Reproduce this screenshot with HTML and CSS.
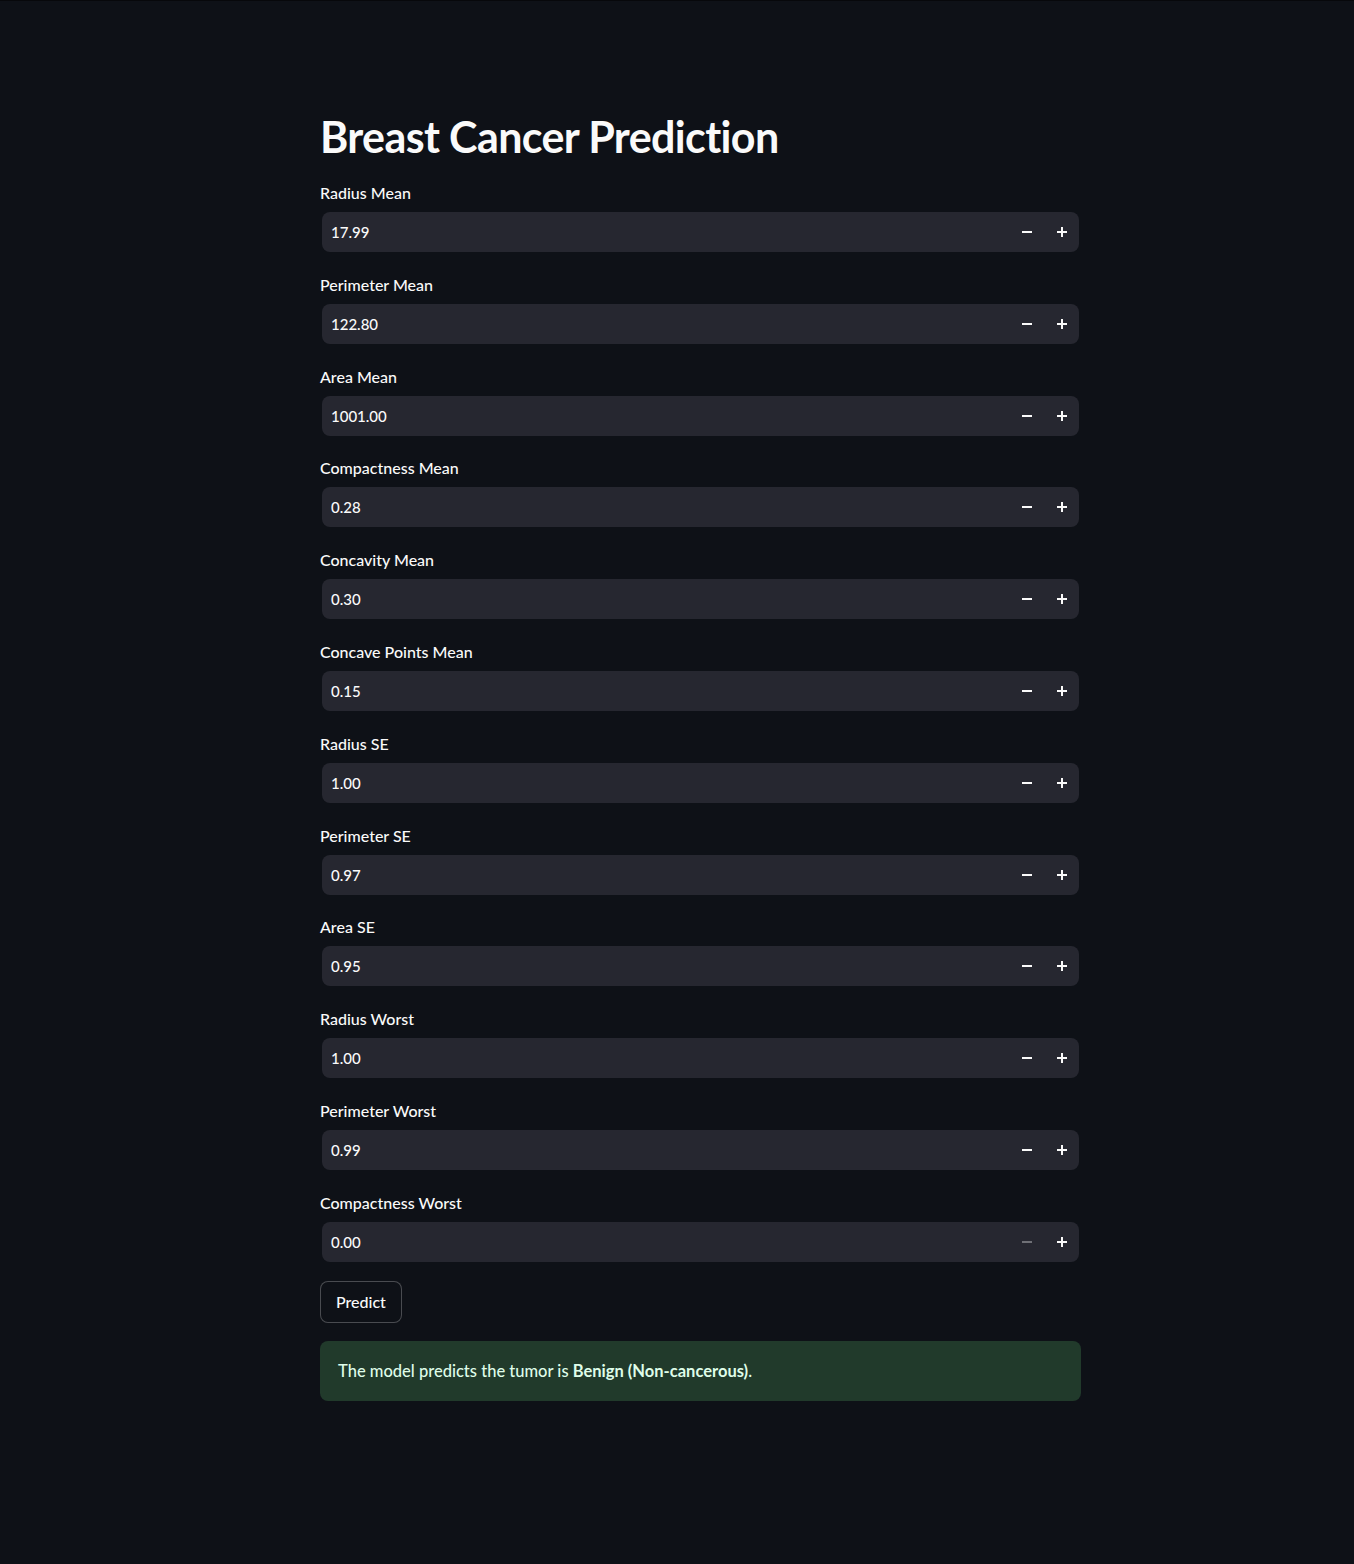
FILE: index.html
```html
<!DOCTYPE html>
<html lang="en">
<head>
<meta charset="utf-8">
<title>Breast Cancer Prediction</title>
<link rel="stylesheet" href="styles.css">
</head>
<body>
<main class="page">
  <h1 class="title">Breast Cancer Prediction</h1>
  <div class="form">
    <div class="field">
      <div class="label">Radius Mean</div>
      <div class="number"><span class="value">17.99</span><span class="step"><svg viewBox="0 0 10 10"><path d="M0 5H10"/></svg></span><span class="step"><svg viewBox="0 0 10 10"><path d="M0 5H10M5 0V10"/></svg></span></div>
    </div>
    <div class="field">
      <div class="label">Perimeter Mean</div>
      <div class="number"><span class="value">122.80</span><span class="step"><svg viewBox="0 0 10 10"><path d="M0 5H10"/></svg></span><span class="step"><svg viewBox="0 0 10 10"><path d="M0 5H10M5 0V10"/></svg></span></div>
    </div>
    <div class="field">
      <div class="label">Area Mean</div>
      <div class="number"><span class="value">1001.00</span><span class="step"><svg viewBox="0 0 10 10"><path d="M0 5H10"/></svg></span><span class="step"><svg viewBox="0 0 10 10"><path d="M0 5H10M5 0V10"/></svg></span></div>
    </div>
    <div class="field">
      <div class="label">Compactness Mean</div>
      <div class="number"><span class="value">0.28</span><span class="step"><svg viewBox="0 0 10 10"><path d="M0 5H10"/></svg></span><span class="step"><svg viewBox="0 0 10 10"><path d="M0 5H10M5 0V10"/></svg></span></div>
    </div>
    <div class="field">
      <div class="label">Concavity Mean</div>
      <div class="number"><span class="value">0.30</span><span class="step"><svg viewBox="0 0 10 10"><path d="M0 5H10"/></svg></span><span class="step"><svg viewBox="0 0 10 10"><path d="M0 5H10M5 0V10"/></svg></span></div>
    </div>
    <div class="field">
      <div class="label">Concave Points Mean</div>
      <div class="number"><span class="value">0.15</span><span class="step"><svg viewBox="0 0 10 10"><path d="M0 5H10"/></svg></span><span class="step"><svg viewBox="0 0 10 10"><path d="M0 5H10M5 0V10"/></svg></span></div>
    </div>
    <div class="field">
      <div class="label">Radius SE</div>
      <div class="number"><span class="value">1.00</span><span class="step"><svg viewBox="0 0 10 10"><path d="M0 5H10"/></svg></span><span class="step"><svg viewBox="0 0 10 10"><path d="M0 5H10M5 0V10"/></svg></span></div>
    </div>
    <div class="field">
      <div class="label">Perimeter SE</div>
      <div class="number"><span class="value">0.97</span><span class="step"><svg viewBox="0 0 10 10"><path d="M0 5H10"/></svg></span><span class="step"><svg viewBox="0 0 10 10"><path d="M0 5H10M5 0V10"/></svg></span></div>
    </div>
    <div class="field">
      <div class="label">Area SE</div>
      <div class="number"><span class="value">0.95</span><span class="step"><svg viewBox="0 0 10 10"><path d="M0 5H10"/></svg></span><span class="step"><svg viewBox="0 0 10 10"><path d="M0 5H10M5 0V10"/></svg></span></div>
    </div>
    <div class="field">
      <div class="label">Radius Worst</div>
      <div class="number"><span class="value">1.00</span><span class="step"><svg viewBox="0 0 10 10"><path d="M0 5H10"/></svg></span><span class="step"><svg viewBox="0 0 10 10"><path d="M0 5H10M5 0V10"/></svg></span></div>
    </div>
    <div class="field">
      <div class="label">Perimeter Worst</div>
      <div class="number"><span class="value">0.99</span><span class="step"><svg viewBox="0 0 10 10"><path d="M0 5H10"/></svg></span><span class="step"><svg viewBox="0 0 10 10"><path d="M0 5H10M5 0V10"/></svg></span></div>
    </div>
    <div class="field">
      <div class="label">Compactness Worst</div>
      <div class="number"><span class="value">0.00</span><span class="step step-disabled"><svg viewBox="0 0 10 10"><path d="M0 5H10"/></svg></span><span class="step"><svg viewBox="0 0 10 10"><path d="M0 5H10M5 0V10"/></svg></span></div>
    </div>
  </div>
  <button class="predict">Predict</button>
  <div class="alert"><p class="alert-text">The model predicts the tumor is <strong>Benign (Non-cancerous)</strong>.</p></div>
</main>
</body>
</html>
```
FILE: styles.css
```css
* { box-sizing: border-box; }
html, body {
  margin: 0;
  background: #0e1117;
}
body {
  min-height: 100vh;
  border-top: 1px solid #07080b;
  font-family: Lato, "Noto Sans", sans-serif;
  color: #fafafa;
}
.page {
  width: 1080px;
  padding: 110px 0 0 320px;
}
.title {
  margin: 0;
  font-size: 43px;
  font-weight: 700;
  line-height: 1.2;
  letter-spacing: -0.62px;
}
.form {
  display: flex;
  flex-direction: column;
  gap: 22.8px;
  margin-top: 20.5px;
}
.field {
  display: flex;
  flex-direction: column;
}
.label {
  font-size: 16px;
  font-weight: 500;
  line-height: 20px;
  margin-bottom: 9px;
}
.number {
  display: flex;
  align-items: center;
  height: 40px;
  margin: 0 1px 0 2px;
  background: #262730;
  border-radius: 8px;
  padding: 0 0 0 9px;
}
.value {
  flex: 1;
  font-size: 15px;
  font-weight: 500;
}
.step {
  width: 35px;
  height: 100%;
  display: flex;
  align-items: center;
  justify-content: center;
  color: #fafafa;
}
.step svg {
  width: 10px;
  height: 10px;
  fill: none;
  stroke: currentColor;
  stroke-width: 2;
}
.step-disabled { color: rgba(250, 250, 250, 0.35); }
.predict {
  display: block;
  margin-top: 19px;
  height: 42px;
  padding: 0 15px;
  background: #0e1117;
  color: #fafafa;
  border: 1px solid rgba(250, 250, 250, 0.25);
  border-radius: 8px;
  font-family: inherit;
  font-size: 16px;
  font-weight: 500;
}
.alert {
  margin-top: 18px;
  width: 761px;
  height: 60px;
  display: flex;
  align-items: center;
  padding: 0 18px;
  background: #213a2b;
  color: #dffde9;
  border-radius: 8px;
}
.alert-text {
  margin: 0;
  font-size: 16.5px;
  font-weight: 500;
}
.alert-text strong { font-weight: 700; }
```
